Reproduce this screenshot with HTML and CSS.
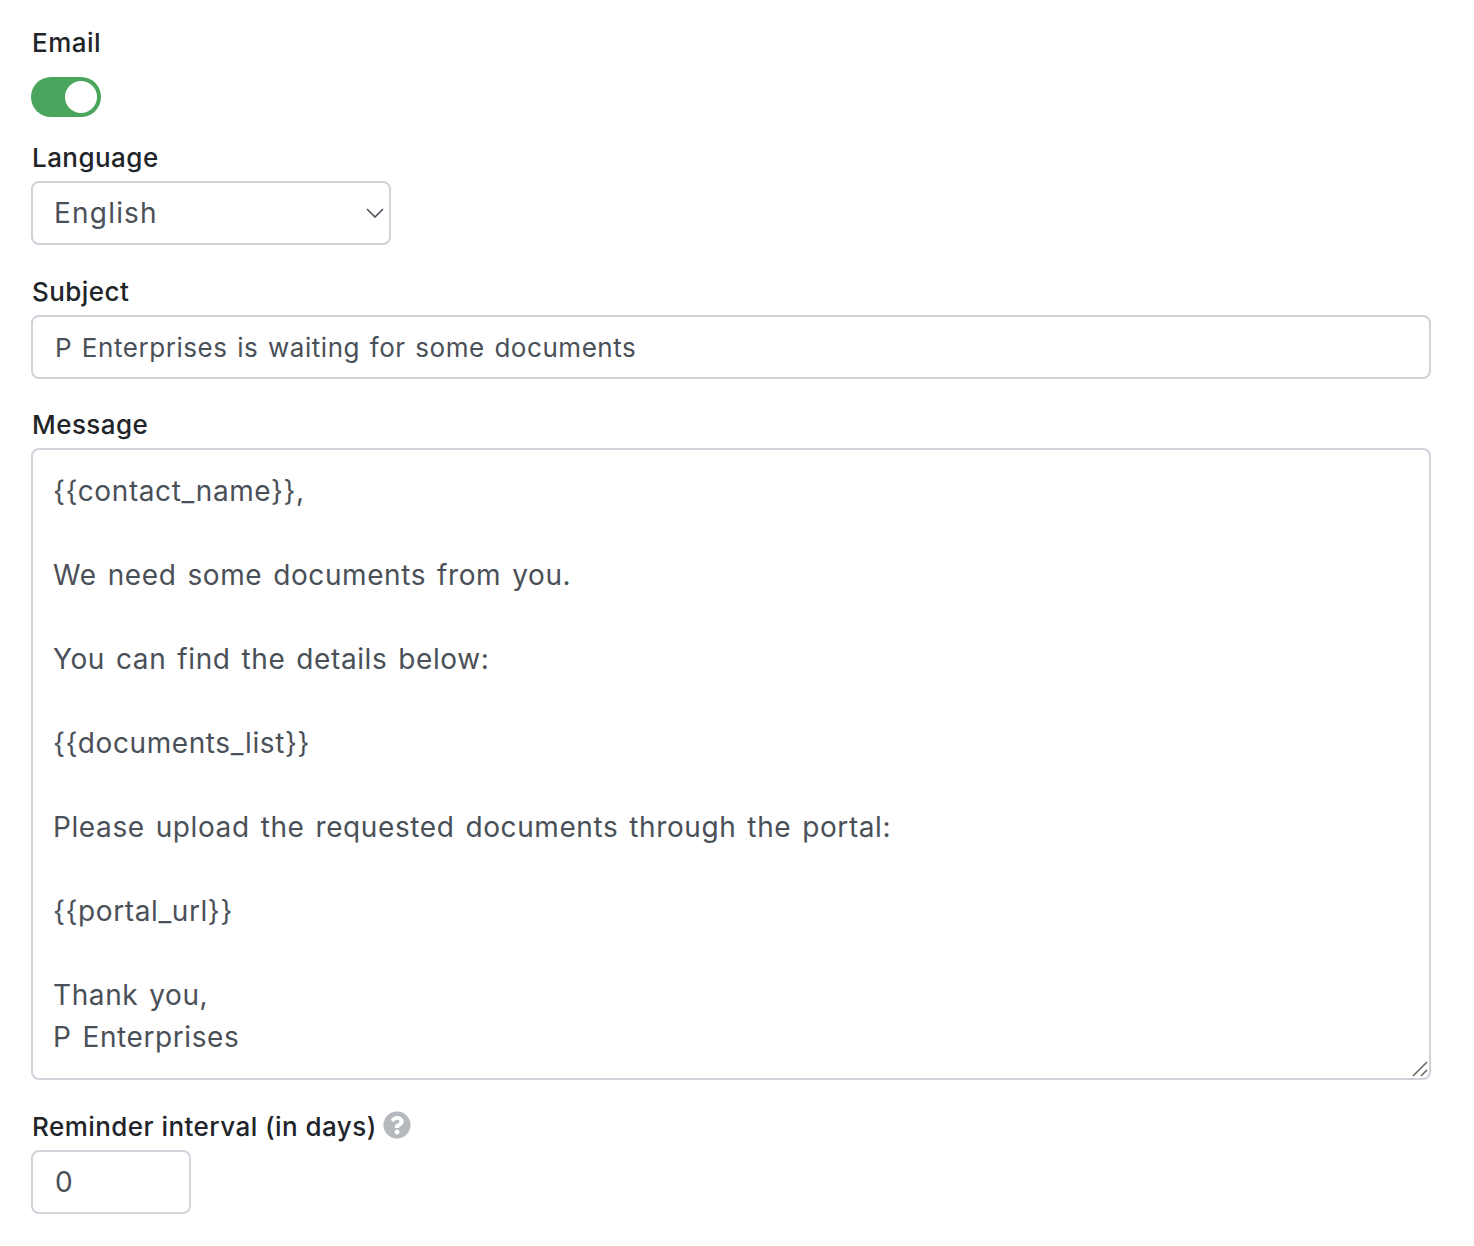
FILE: index.html
```html
<!DOCTYPE html>
<html lang="en">
<head>
  <meta charset="UTF-8">
  <meta name="viewport" content="width=device-width, initial-scale=1.0">
  <title>Document reminder</title>
  <link rel="stylesheet" href="styles.css">
</head>
<body>
  <form class="reminder-form">
    <div class="form-group email-group">
      <label class="form-label">Email</label>
      <div class="toggle"><span class="toggle-knob"></span></div>
    </div>

    <div class="form-group">
      <label class="form-label" for="language">Language</label>
      <div class="select-wrap">
        <select id="language" class="form-control">
          <option>English</option>
        </select>
        <svg class="select-arrow" viewBox="0 0 18 10" width="18" height="10">
          <path d="M1 1l8 8 8-8" fill="none" stroke="#4a5058" stroke-width="1.6"/>
        </svg>
      </div>
    </div>

    <div class="form-group subject-group">
      <label class="form-label" for="subject">Subject</label>
      <input id="subject" class="form-control subject-input" type="text" value="P Enterprises is waiting for some documents">
    </div>

    <div class="form-group">
      <label class="form-label" for="message">Message</label>
      <div class="message-wrap">
        <textarea id="message" class="form-control message-box" rows="14">{{contact_name}},

We need some documents from you.

You can find the details below:

{{documents_list}}

Please upload the requested documents through the portal:

{{portal_url}}

Thank you,
P Enterprises</textarea>
        <svg class="resize-grip" viewBox="0 0 16 16" width="16" height="16">
          <path d="M1 15L15 1M9 15l6-6" fill="none" stroke="#6b6b6b" stroke-width="1.6"/>
        </svg>
      </div>
    </div>

    <div class="form-group">
      <label class="form-label" for="interval">Reminder interval (in days)
        <svg class="help-icon" viewBox="0 0 512 512" width="28" height="28">
          <path fill="#b5b8bc" d="M504 256c0 136.997-111.043 248-248 248S8 392.997 8 256C8 119.083 119.043 8 256 8s248 111.083 248 248zM262.655 90c-54.497 0-89.255 22.957-116.549 63.758-3.536 5.286-2.353 12.415 2.715 16.258l34.699 26.31c5.205 3.947 12.621 3.008 16.665-2.122 17.864-22.658 30.113-35.797 57.303-35.797 20.429 0 45.698 13.148 45.698 32.958 0 14.976-12.363 22.667-32.534 33.976C247.128 238.528 216 254.941 216 296v4c0 6.627 5.373 12 12 12h56c6.627 0 12-5.373 12-12v-1.333c0-28.462 83.186-29.647 83.186-106.667 0-58.002-60.165-102-116.531-102zM256 338c-25.365 0-46 20.635-46 46 0 25.364 20.635 46 46 46s46-20.636 46-46c0-25.365-20.635-46-46-46z"/>
        </svg>
      </label>
      <input id="interval" class="form-control interval-input" type="text" value="0">
    </div>
  </form>
</body>
</html>
```

FILE: styles.css
```css
body {
  margin: 0;
  background-color: #ffffff;
  font-family: Inter, "Open Sans", sans-serif;
}

.reminder-form {
  width: 1400px;
  padding: 27px 0 0 31px;
}

.form-group {
  margin-bottom: 31px;
}

.email-group {
  margin-bottom: 25px;
}

.email-group .form-label {
  margin-bottom: 20px;
}

.subject-group {
  margin-bottom: 30px;
}

.form-label {
  display: flex;
  align-items: center;
  gap: 6px;
  height: 30px;
  margin-bottom: 9px;
  padding-left: 1px;
  font-size: 26px;
  font-weight: 500;
  letter-spacing: 0.45px;
  color: #212529;
}

.help-icon {
  margin-top: -2px;
}

.toggle {
  display: flex;
  justify-content: flex-end;
  align-items: center;
  box-sizing: border-box;
  width: 70px;
  height: 40px;
  padding: 4px;
  border-radius: 20px;
  background-color: #4aa65c;
}

.toggle-knob {
  width: 32px;
  height: 32px;
  border-radius: 50%;
  background-color: #ffffff;
}

.form-control {
  display: block;
  box-sizing: border-box;
  width: 100%;
  height: 64px;
  margin: 0;
  padding: 0 22px;
  border: 2px solid #ced4da;
  border-radius: 8px;
  outline: none;
  background-color: #ffffff;
  font-family: inherit;
  font-size: 28px;
  letter-spacing: 1px;
  color: #4a5058;
}

.subject-input {
  font-size: 26px;
  letter-spacing: 0.55px;
  word-spacing: 1.8px;
}

.select-wrap {
  position: relative;
  width: 360px;
}

.select-wrap select {
  appearance: none;
  padding-left: 21px;
  letter-spacing: 1.2px;
}

.select-arrow {
  position: absolute;
  top: 27px;
  right: 7px;
}

.message-wrap {
  position: relative;
}

.message-box {
  height: 632px;
  padding: 20px;
  line-height: 42px;
  letter-spacing: 0.6px;
  word-spacing: 2.5px;
  resize: none;
}

.resize-grip {
  position: absolute;
  right: 3px;
  bottom: 3px;
  pointer-events: none;
}

.interval-input {
  width: 160px;
}
```
